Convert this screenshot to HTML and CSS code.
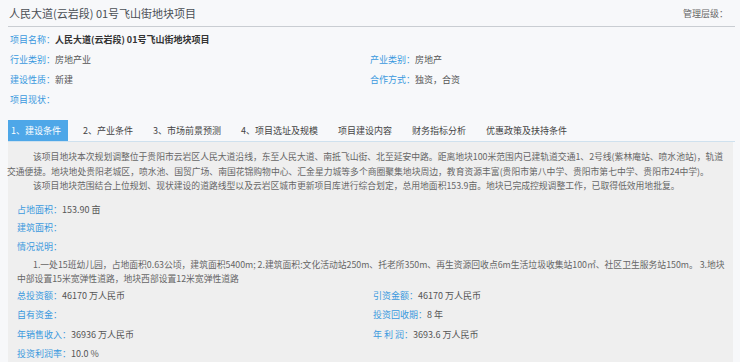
FILE: index.html
```html
<!DOCTYPE html>
<html lang="zh-CN">
<head>
  <meta charset="UTF-8">
  <title>人民大道(云岩段) 01号飞山街地块项目</title>
  <link rel="stylesheet" href="styles.css">
</head>
<body>
  <div class="page">
    <div class="head">
      <h1 class="title">人民大道(云岩段) 01号飞山街地块项目</h1>
      <span class="level">管理层级：</span>
    </div>

    <div class="info">
      <div class="row full"><span class="lbl">项目名称：</span><b class="strong">人民大道(云岩段) 01号飞山街地块项目</b></div>
      <div class="row"><span class="lbl">行业类别：</span>房地产业</div>
      <div class="row"><span class="lbl">产业类别：</span>房地产</div>
      <div class="row"><span class="lbl">建设性质：</span>新建</div>
      <div class="row"><span class="lbl">合作方式：</span>独资，合资</div>
      <div class="row full"><span class="lbl">项目现状：</span></div>
    </div>

    <div class="tabs">
      <span class="tab active">1、建设条件</span>
      <span class="tab">2、产业条件</span>
      <span class="tab">3、市场前景预测</span>
      <span class="tab">4、项目选址及规模</span>
      <span class="tab">项目建设内容</span>
      <span class="tab">财务指标分析</span>
      <span class="tab">优惠政策及扶持条件</span>
    </div>

    <div class="panel">
      <div class="intro">
        <p>该项目地块本次规划调整位于贵阳市云岩区人民大道沿线，东至人民大道、南抵飞山街、北至延安中路。距离地块100米范围内已建轨道交通1、2号线(紫林庵站、喷水池站)，轨道交通便捷。地块地处贵阳老城区，喷水池、国贸广场、南国花锦购物中心、汇金星力城等多个商圈聚集地块周边，教育资源丰富(贵阳市第八中学、贵阳市第七中学、贵阳市24中学)。</p>
        <p>该项目地块范围结合上位规划、现状建设的道路线型以及云岩区城市更新项目库进行综合划定，总用地面积153.9亩。地块已完成控规调整工作，已取得低效用地批复。</p>
      </div>

      <div class="field first"><span class="lbl">占地面积：</span>153.90 亩</div>
      <div class="field"><span class="lbl">建筑面积：</span></div>
      <div class="field"><span class="lbl">情况说明：</span></div>
      <p class="note">1.一处15班幼儿园，占地面积0.63公顷，建筑面积5400m; 2.建筑面积:文化活动站250m、托老所350m、再生资源回收点6m生活垃圾收集站100㎡、社区卫生服务站150m。 3.地块中部设置15米宽弹性道路，地块西部设置12米宽弹性道路</p>

      <div class="grid">
        <div class="cell"><span class="lbl">总投资额：</span>46170 万人民币</div>
        <div class="cell"><span class="lbl">引资金额：</span>46170 万人民币</div>
        <div class="cell"><span class="lbl">自有资金：</span></div>
        <div class="cell"><span class="lbl">投资回收期：</span>8 年</div>
        <div class="cell"><span class="lbl">年销售收入：</span>36936 万人民币</div>
        <div class="cell"><span class="lbl">年 利 润：</span>3693.6 万人民币</div>
        <div class="cell"><span class="lbl">投资利润率：</span>10.0 %</div>
      </div>
    </div>
  </div>
</body>
</html>
```

FILE: styles.css
```css
body {
  margin: 0;
  background-color: #f7f8fa;
  color: #555;
  font-family: "Noto Sans CJK SC", "Noto Sans", sans-serif;
  font-size: 9px;
}

.page {
  padding: 0 5px 0 8px;
}

.head {
  display: flex;
  align-items: center;
  justify-content: space-between;
  height: 26px;
  border-bottom: 1.5px solid #c9cdd2;
}

.title {
  margin: 0 0 0 1px;
  font-size: 11px;
  font-weight: normal;
  color: #4a4f55;
}

.level {
  margin-right: 7px;
  color: #666;
}

.lbl {
  color: #3a99de;
}

.strong {
  color: #333;
}

.info {
  display: grid;
  grid-template-columns: 360px 1fr;
  margin-top: 3px;
  padding-left: 2px;
}

.info .row {
  height: 20px;
  line-height: 20px;
}

.info .full {
  grid-column: 1 / 3;
}

.tabs {
  display: flex;
  margin-top: 10px;
  height: 21px;
  border-bottom: 1.5px solid #cfe1ee;
}

.tab {
  padding: 0 5px 0 4px;
  margin-right: 11px;
  line-height: 21px;
  color: #444;
}

.tab.active {
  background-color: #4ea7e8;
  color: #fff;
  padding: 0 7px 0 3px;
}

.panel {
  background-color: #efefef;
  margin-right: 2px;
  padding: 8px 3px 1px 9px;
}

.intro {
  margin-left: -10px;
}

.intro p {
  margin: 0;
  font-size: 8.8px;
  line-height: 14.5px;
  text-indent: 26px;
  color: #666;
}

.field {
  height: 18.5px;
  line-height: 18.5px;
}

.field.first {
  margin-top: 7px;
}

.note {
  margin: 2px 0 0;
  font-size: 8.8px;
  line-height: 14px;
  text-indent: 16px;
  color: #666;
}

.grid {
  display: grid;
  grid-template-columns: 356px 1fr;
}

.grid .cell {
  height: 19.3px;
  line-height: 19.3px;
}
```
